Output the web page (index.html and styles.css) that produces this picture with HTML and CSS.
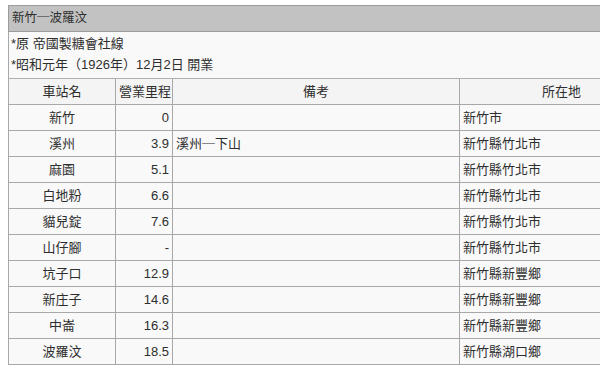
FILE: index.html
```
<!DOCTYPE html>
<html lang="zh-Hant">
<head>
<meta charset="utf-8">
<link rel="stylesheet" href="styles.css">
</head>
<body>
<div class="frame">
<table class="rail">
  <colgroup>
    <col class="c-name">
    <col class="c-km">
    <col class="c-note">
    <col class="c-loc">
  </colgroup>
  <tr class="title"><td colspan="4">新竹<span class="dash">─</span>波羅汶</td></tr>
  <tr class="notes"><td colspan="4"><div>*原 帝國製糖會社線</div><div>*昭和元年（1926年）12月2日 開業</div></td></tr>
  <tr class="head">
    <td class="center">車站名</td>
    <td class="left">營業里程</td>
    <td class="center">備考</td>
    <td class="center">所在地</td>
  </tr>
  <tr><td class="center">新竹</td><td class="num">0</td><td></td><td>新竹市</td></tr>
  <tr><td class="center">溪州</td><td class="num">3.9</td><td>溪州<span class="dash">─</span>下山</td><td>新竹縣竹北市</td></tr>
  <tr><td class="center">麻園</td><td class="num">5.1</td><td></td><td>新竹縣竹北市</td></tr>
  <tr><td class="center">白地粉</td><td class="num">6.6</td><td></td><td>新竹縣竹北市</td></tr>
  <tr><td class="center">貓兒錠</td><td class="num">7.6</td><td></td><td>新竹縣竹北市</td></tr>
  <tr><td class="center">山仔腳</td><td class="num">-</td><td></td><td>新竹縣竹北市</td></tr>
  <tr><td class="center">坑子口</td><td class="num">12.9</td><td></td><td>新竹縣新豐鄉</td></tr>
  <tr><td class="center">新庄子</td><td class="num">14.6</td><td></td><td>新竹縣新豐鄉</td></tr>
  <tr><td class="center">中崙</td><td class="num">16.3</td><td></td><td>新竹縣新豐鄉</td></tr>
  <tr><td class="center">波羅汶</td><td class="num">18.5</td><td></td><td>新竹縣湖口鄉</td></tr>
</table>
</div>
</body>
</html>
```
FILE: styles.css
```
html, body {
  background: #ffffff;
}
body {
  margin: 5px 0 0 8px;
  font-family: "Liberation Sans", "Noto Sans CJK TC", sans-serif;
  font-size: 13px;
  color: #2e2e2e;
}
.frame {
  width: 592px;
  overflow: hidden;
}
.rail {
  border-collapse: collapse;
  table-layout: fixed;
  width: 655px;
  background: #f9f9f9;
}
.c-name { width: 107px; }
.c-km { width: 57px; }
.c-note { width: 287px; }
.c-loc { width: 204px; }
.rail td {
  border: 1px solid #a8a8a8;
  height: 25px;
  padding: 0 3px;
  line-height: 25px;
  white-space: nowrap;
  overflow: hidden;
}
.dash {
  font-family: "Noto Sans CJK TC", sans-serif;
  line-height: 1;
}
.title td {
  background: #c2c2c2;
  border-color: #9c9c9c;
  height: 25px;
  padding-left: 3px;
  font-size: 12.5px;
}
.notes td {
  height: 45px;
  line-height: 21px;
  padding: 1px 2px 0;
  vertical-align: top;
  border-bottom-color: #b0b0b0;
}
.head td {
  background: #f4f4f4;
}
.center { text-align: center; }
.left { text-align: left; }
.num { text-align: right; }
```
